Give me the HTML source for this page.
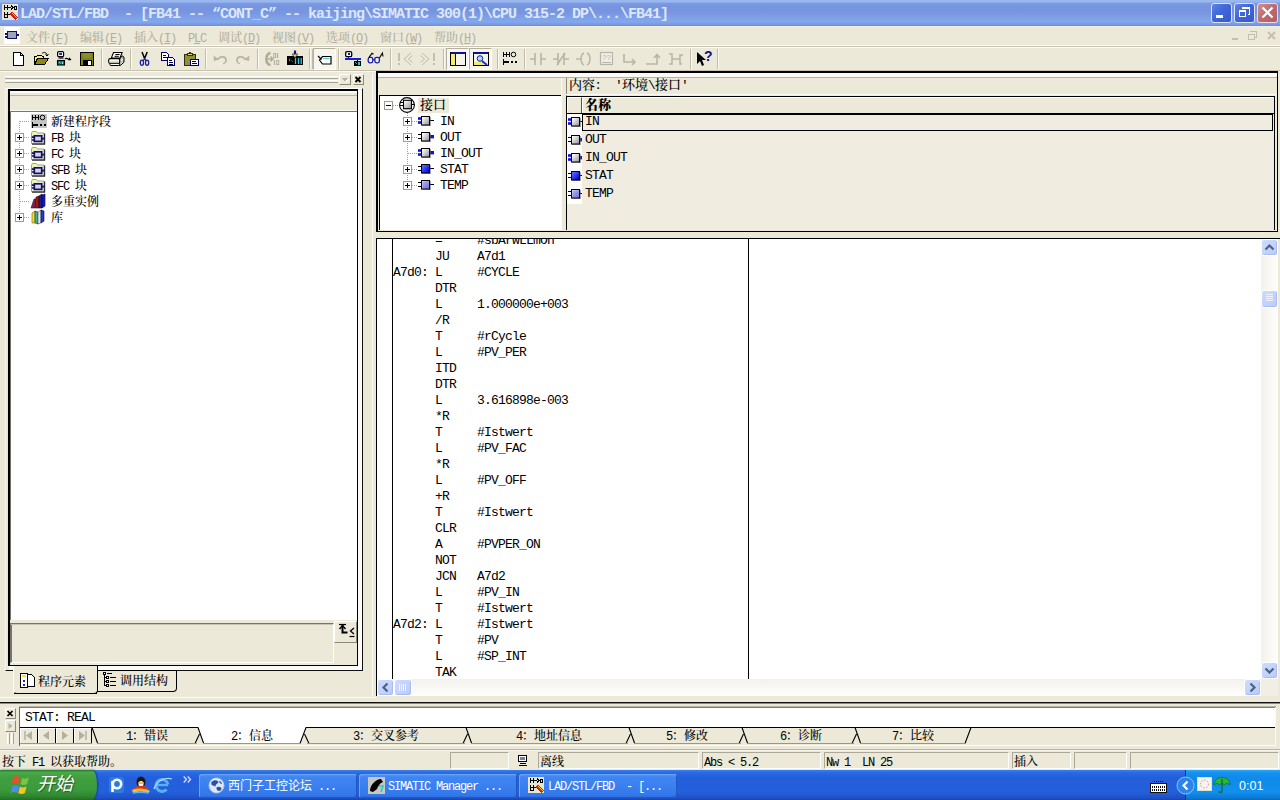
<!DOCTYPE html><html lang="zh"><head><meta charset="utf-8"><title>LAD/STL/FBD</title><style>
html,body{margin:0;padding:0}
body{width:1280px;height:800px;overflow:hidden;background:#ece9d8;position:relative;font-family:"Liberation Mono","Noto Serif CJK SC",monospace;font-size:12px;color:#000}
.a{position:absolute;box-sizing:border-box}
.t{white-space:pre;line-height:14px;height:14px;font-size:12px;font-weight:500}
.l{letter-spacing:-1.2px;font-family:"Liberation Mono",monospace;font-weight:400}
.t13{white-space:pre;line-height:16px;height:16px;font-size:13px;font-weight:500}
.t13 .l{letter-spacing:-0.8px;font-size:13px}
.g{color:#b2ae9f}
svg{position:absolute;overflow:visible}
</style></head><body>
<div class="a " style="left:0px;top:0px;width:1280px;height:26px;background:linear-gradient(to bottom,#9bb9ef 0px,#98b6ee 2px,#7c9ae2 3.500px,#7896df 5px,#7795de 11px,#7b99e3 14px,#80a3ea 19px,#81a8ec 22px,#7c9ae2 24px,#7a8ad2 26px);"></div>
<svg style="left:2px;top:4px" width="17" height="17" viewBox="0 0 17 17" shape-rendering="crispEdges">
<rect x="0" y="0" width="16" height="16" fill="#e8e4d4"/>
<path d="M2 1v5M5 1v5M2 3.5h3M5 3.5h4M9 1.5l2 2-2 2M12 2h2v3h-2zM2 8v6M5 8v6M2 10.5h3M5 10.5h3M2 13.5h3" stroke="#000" stroke-width="1" fill="none"/>
<path d="M8 8l2 0 0 2z" fill="#000"/>
<path d="M9 9l6 6" stroke="#d02010" stroke-width="3"/>
<path d="M10.5 9.5l5 5" stroke="#f0d020" stroke-width="1"/>
</svg>
<div class="a" style="left:20px;top:6px;height:18px;font:bold 15px/18px 'Liberation Mono',monospace;letter-spacing:-1px;color:#dce7fa;white-space:pre">LAD/STL/FBD  - [FB41 -- “CONT_C” -- kaijing\SIMATIC 300(1)\CPU 315-2 DP\...\FB41]</div>
<div class="a " style="left:1211px;top:3px;width:21px;height:20px;background:linear-gradient(135deg,#5f84e8 0%,#4166d8 45%,#3759c8 100%);border:1px solid #d9e4fb;border-radius:3px;"></div><div class="a " style="left:1216px;top:15px;width:7px;height:3px;background:#fff"></div>
<div class="a " style="left:1234px;top:3px;width:21px;height:20px;background:linear-gradient(135deg,#5f84e8 0%,#4166d8 45%,#3759c8 100%);border:1px solid #d9e4fb;border-radius:3px;"></div><svg style="left:1234px;top:3px" width="21" height="20" viewBox="0 0 21 20" shape-rendering="crispEdges"><path d="M8 5h7v6h-2" stroke="#fff" stroke-width="1" fill="none" transform="translate(.5,.5)"/><path d="M8 5h8" stroke="#fff" stroke-width="2"/><rect x="5.500" y="7.500" width="6" height="6" fill="none" stroke="#fff"/><path d="M5 8h7" stroke="#fff" stroke-width="2"/></svg>
<div class="a " style="left:1257px;top:3px;width:21px;height:20px;background:linear-gradient(135deg,#cf8f8f 0%,#bd6a6c 50%,#b55d60 100%);border:1px solid #ecdcea;border-radius:3px;"></div><svg style="left:1257px;top:3px" width="21" height="20" viewBox="0 0 21 20"><path d="M5.500 4.500l10 10M15.500 4.500l-10 10" stroke="#fff" stroke-width="2.200" fill="none"/></svg>
<div class="a " style="left:0px;top:26px;width:1280px;height:20px;background:#ece9d8"></div>
<div class="a " style="left:0px;top:26px;width:1280px;height:2px;background:linear-gradient(to bottom,#eef2ea,#ece9d8)"></div>
<div class="a " style="left:0px;top:45px;width:1280px;height:1px;background:#fbfaf6"></div>
<div class="a " style="left:4px;top:27px;width:16px;height:17px;background:#fff"></div>
<svg style="left:4px;top:27px" width="16" height="17" viewBox="0 0 16 17" shape-rendering="crispEdges">
<rect x="3.5" y="4.5" width="9" height="7" fill="#a0a4b8" stroke="#10106a" stroke-width="1.4"/>
<path d="M1 6.5h2M1 9.5h2M13 8h2" stroke="#10106a" stroke-width="2"/></svg>
<div class="a t g" style="left:26px;top:32px">文件<span class="l">(<u>F</u>)</span></div>
<div class="a t g" style="left:80px;top:32px">编辑<span class="l">(<u>E</u>)</span></div>
<div class="a t g" style="left:134px;top:32px">插入<span class="l">(<u>I</u>)</span></div>
<div class="a t g" style="left:188px;top:32px"><span class="l">P<u>L</u>C</span></div>
<div class="a t g" style="left:218px;top:32px">调试<span class="l">(<u>D</u>)</span></div>
<div class="a t g" style="left:272px;top:32px">视图<span class="l">(<u>V</u>)</span></div>
<div class="a t g" style="left:326px;top:32px">选项<span class="l">(<u>O</u>)</span></div>
<div class="a t g" style="left:380px;top:32px">窗口<span class="l">(<u>W</u>)</span></div>
<div class="a t g" style="left:434px;top:32px">帮助<span class="l">(<u>H</u>)</span></div>
<svg style="left:1228px;top:28px" width="50" height="15" viewBox="0 0 50 15" shape-rendering="crispEdges">
<path d="M4 10.5h6" stroke="#c4c0b0" stroke-width="2"/>
<path d="M22.5 3.5h6v6h-2M22 3h7" stroke="#c4c0b0" stroke-width="1" fill="none"/><rect x="20.500" y="6.500" width="6" height="5" fill="none" stroke="#c4c0b0"/><path d="M20 6h7" stroke="#c4c0b0"/>
<path d="M40 4l7 7M47 4l-7 7" stroke="#c4c0b0" stroke-width="2" shape-rendering="auto"/></svg>
<div class="a " style="left:0px;top:46px;width:1280px;height:1px;background:#c9c5b4"></div>
<div class="a " style="left:0px;top:47px;width:1280px;height:1px;background:#fbfaf6"></div>
<div class="a " style="left:0px;top:70px;width:1280px;height:1px;background:#c5c1b0"></div>
<div class="a " style="left:0px;top:71px;width:376px;height:1px;background:#faf9f4"></div>
<div class="a " style="left:101px;top:49px;width:1px;height:20px;background:#c0bcab"></div><div class="a " style="left:102px;top:49px;width:1px;height:20px;background:#fbfaf5"></div>
<div class="a " style="left:130px;top:49px;width:1px;height:20px;background:#c0bcab"></div><div class="a " style="left:131px;top:49px;width:1px;height:20px;background:#fbfaf5"></div>
<div class="a " style="left:205px;top:49px;width:1px;height:20px;background:#c0bcab"></div><div class="a " style="left:206px;top:49px;width:1px;height:20px;background:#fbfaf5"></div>
<div class="a " style="left:257px;top:49px;width:1px;height:20px;background:#c0bcab"></div><div class="a " style="left:258px;top:49px;width:1px;height:20px;background:#fbfaf5"></div>
<div class="a " style="left:309px;top:49px;width:1px;height:20px;background:#c0bcab"></div><div class="a " style="left:310px;top:49px;width:1px;height:20px;background:#fbfaf5"></div>
<div class="a " style="left:338px;top:49px;width:1px;height:20px;background:#c0bcab"></div><div class="a " style="left:339px;top:49px;width:1px;height:20px;background:#fbfaf5"></div>
<div class="a " style="left:390px;top:49px;width:1px;height:20px;background:#c0bcab"></div><div class="a " style="left:391px;top:49px;width:1px;height:20px;background:#fbfaf5"></div>
<div class="a " style="left:443px;top:49px;width:1px;height:20px;background:#c0bcab"></div><div class="a " style="left:444px;top:49px;width:1px;height:20px;background:#fbfaf5"></div>
<div class="a " style="left:497px;top:49px;width:1px;height:20px;background:#c0bcab"></div><div class="a " style="left:498px;top:49px;width:1px;height:20px;background:#fbfaf5"></div>
<div class="a " style="left:524px;top:49px;width:1px;height:20px;background:#c0bcab"></div><div class="a " style="left:525px;top:49px;width:1px;height:20px;background:#fbfaf5"></div>
<div class="a " style="left:690px;top:49px;width:1px;height:20px;background:#c0bcab"></div><div class="a " style="left:691px;top:49px;width:1px;height:20px;background:#fbfaf5"></div>
<div class="a " style="left:717px;top:49px;width:1px;height:20px;background:#c0bcab"></div><div class="a " style="left:718px;top:49px;width:1px;height:20px;background:#fbfaf5"></div>
<div class="a " style="left:312px;top:49px;width:1px;height:20px;background:#c0bcab"></div>
<div class="a " style="left:313px;top:48px;width:23px;height:22px;background:#f6f5ee;border-top:1px solid #b4b0a0;border-left:1px solid #b4b0a0;border-right:1px solid #fff;border-bottom:1px solid #fff"></div>
<div class="a " style="left:446px;top:48px;width:23px;height:22px;background:#f6f5ee;border-top:1px solid #b4b0a0;border-left:1px solid #b4b0a0;border-right:1px solid #fff;border-bottom:1px solid #fff"></div>
<div class="a " style="left:469px;top:48px;width:23px;height:22px;background:#f6f5ee;border-top:1px solid #b4b0a0;border-left:1px solid #b4b0a0;border-right:1px solid #fff;border-bottom:1px solid #fff"></div>
<svg style="left:11px;top:51px" width="16" height="16" viewBox="0 0 16 16" shape-rendering="crispEdges"><path d="M2.500 1.500h7l3 3v10h-10z" fill="#fff" stroke="#000"/><path d="M9.500 1.500v3h3" fill="none" stroke="#000"/></svg>
<svg style="left:33px;top:51px" width="16" height="16" viewBox="0 0 16 16" shape-rendering="crispEdges"><path d="M1.500 13.500v-8h2l1-1h4l1 1h1v2" fill="#f8f070" stroke="#000"/><path d="M1.500 13.500l3-6h11l-4 6z" fill="#8a8a10" stroke="#000"/><path d="M9 2.500c2-2 5-1 5 2M12.500 3.500l1.500 1.500 1.500-2" fill="none" stroke="#000" shape-rendering="auto"/></svg>
<svg style="left:56px;top:51px" width="16" height="16" viewBox="0 0 16 16"><rect x="1.600" y="0.600" width="6" height="5" rx="1.200" fill="#fff" stroke="#000" stroke-width="1.200"/><rect x="3.200" y="2" width="2.800" height="2" fill="#2020c0"/><path d="M2.500 7h5" stroke="#000" stroke-width="1.200"/><rect x="1.500" y="9.500" width="7" height="4.500" fill="#107878" stroke="#000" stroke-width="1.100"/><path d="M3 11l1.500 1.500M6.500 10.800v2.200" stroke="#7fe8e8" stroke-width="1"/><path d="M9 8c2-2.500 3.500 1.500 5.500 0.500" stroke="#000" fill="none" stroke-width="1.200"/><path d="M13.200 6.300l2.300 2.400-3 .8z" fill="#000"/></svg>
<svg style="left:79px;top:51px" width="16" height="16" viewBox="0 0 16 16" shape-rendering="crispEdges"><rect x="1.500" y="1.500" width="13" height="13" fill="#808018" stroke="#000"/><rect x="4" y="2" width="8" height="5" fill="#8c8c28"/><rect x="4" y="9" width="9" height="5" fill="#000"/><rect x="9" y="10" width="3" height="4" fill="#fff"/></svg>
<svg style="left:108px;top:51px" width="17" height="16" viewBox="0 0 17 16"><path d="M11.600 8l2.600-3.200 1.800 1.400v5l-3.800 3.400h-1z" fill="#b4b4ac" stroke="#000" stroke-width="1"/><path d="M12.800 7.500l2 1.800M12.600 10.500l2.200-2M12.800 12.800l2-1.800" stroke="#fff" stroke-width=".9"/><path d="M5.500 1.500h8.600l-2.200 5.600h-8.600z" fill="#fff" stroke="#000" stroke-width="1.100"/><path d="M7.400 3.500h4.200M6.600 5.300h4.200" stroke="#000" stroke-width="1"/><rect x="2" y="12" width="9.600" height="2.500" rx=".8" fill="#fff" stroke="#000" stroke-width="1"/><rect x="0.700" y="7.600" width="11" height="4.700" rx="1.400" fill="#fff" stroke="#000" stroke-width="1.100"/><rect x="1.700" y="9.700" width="9.200" height="1.300" fill="#e4e48a"/></svg>
<svg style="left:137px;top:51px" width="16" height="16" viewBox="0 0 16 16"><path d="M5 1l2.600 6.500M10.200 1l-2.600 6.500" stroke="#000" stroke-width="1.500" fill="none"/><path d="M7.600 7.500l-1.500 2.500M7.600 7.500l1.500 2.500" stroke="#1c1c9c" stroke-width="1.300"/><ellipse cx="4.900" cy="11.800" rx="1.600" ry="2.600" fill="none" stroke="#1c1c9c" stroke-width="1.300"/><ellipse cx="10.100" cy="11.800" rx="1.600" ry="2.600" fill="none" stroke="#1c1c9c" stroke-width="1.300"/></svg>
<svg style="left:160px;top:51px" width="16" height="16" viewBox="0 0 16 16" shape-rendering="crispEdges"><path d="M1.500 1.500h5l2 2v6h-7z" fill="#fff" stroke="#000060"/><path d="M3 4h3M3 6h4" stroke="#000060"/><path d="M7.500 6.500h5l2 2v6h-7z" fill="#fff" stroke="#000060"/><path d="M9 9h3M9 11h4M9 13h4" stroke="#000060"/></svg>
<svg style="left:183px;top:51px" width="16" height="16" viewBox="0 0 16 16" shape-rendering="crispEdges"><rect x="1.500" y="3.500" width="11" height="11" fill="#90903a" stroke="#303010"/><path d="M4.500 4.500v-2h1.500l1-1 1 1h1.500v2z" fill="#e0d870" stroke="#303010"/><path d="M7.500 8.500h6l2 0v6h-8z" fill="#fff" stroke="#000070"/><path d="M9 10.500h4M9 12.500h5" stroke="#000070"/></svg>
<svg style="left:212px;top:51px" width="16" height="16" viewBox="0 0 16 16"><path d="M6 8.500c1.500-3.500 8-3.500 8 .500c0 2-1.500 3.200-3.500 3.500" fill="none" stroke="#b8b4a4" stroke-width="1.700"/><path d="M1.500 4.500l.5 5.500 5-1.500z" fill="#b8b4a4"/><path d="M7 13c2 0 5-1 6-3" fill="none" stroke="#fff" stroke-width="1" opacity=".7"/></svg>
<svg style="left:235px;top:51px" width="16" height="16" viewBox="0 0 16 16"><path d="M10 8.500c-1.500-3.500-8-3.500-8 .500c0 2 1.500 3.200 3.500 3.500" fill="none" stroke="#b8b4a4" stroke-width="1.700"/><path d="M14.500 4.500l-.5 5.500-5-1.500z" fill="#b8b4a4"/><path d="M9 13c-2 0-5-1-6-3" fill="none" stroke="#fff" stroke-width="1" opacity=".7"/></svg>
<svg style="left:264px;top:51px" width="16" height="16" viewBox="0 0 16 16"><path d="M6.500 2.200c-5.500-.5-5.500 12.100 0 11.600" fill="none" stroke="#aeaa9a" stroke-width="2.600"/><path d="M4 8h4.500M6.500 5.500l2.500 2.500-2.500 2.500" fill="none" stroke="#aeaa9a" stroke-width="1.400"/><path d="M13.500 2v5M10.500 9v5" stroke="#b4b0a0" stroke-width="1.200"/><rect x="9.700" y="2.500" width="2" height="4" fill="none" stroke="#b4b0a0"/><rect x="12.700" y="9.500" width="2" height="4" fill="none" stroke="#b4b0a0"/></svg>
<svg style="left:287px;top:50px" width="16" height="17" viewBox="0 0 16 17"><rect x="0" y="6" width="16" height="9" fill="#000"/><path d="M8.500 8v6M11.500 8v6M14.200 8v6" stroke="#38c8d8" stroke-width="1.300"/><path d="M2.500 8.500v3" stroke="#c05040" stroke-width="1"/><path d="M3.500 9.500l2.500 2.500" stroke="#3050d0"/><path d="M8 .500v4" stroke="#101090" stroke-width="2.200"/><path d="M5.200 4h5.600l-2.800 4z" fill="#f0e020" stroke="#101090" stroke-width="0.700"/></svg>
<svg style="left:317px;top:51px" width="16" height="16" viewBox="0 0 16 16"><path d="M5.500 5.500h8.500v7.500h-8.500l-3-4z" fill="#fff" stroke="#000" stroke-width="1.200"/><path d="M1 5l3.500 3.500" stroke="#000" stroke-width="1.100"/><path d="M6 7.500h6.500" stroke="#50d0d0" stroke-width="1.400"/></svg>
<svg style="left:345px;top:50px" width="16" height="17" viewBox="0 0 16 17" shape-rendering="crispEdges"><rect x="0.700" y="1.700" width="6" height="5" rx="1.200" fill="#fff" stroke="#000" stroke-width="1.300" shape-rendering="auto"/><rect x="2.500" y="3.200" width="2.500" height="1.800" fill="#1818a0"/><path d="M3.700 7v1.500" stroke="#1010c0" stroke-width="1.400"/><path d="M0 9h16" stroke="#1020e0" stroke-width="2"/><path d="M12.500 10v2" stroke="#000"/><rect x="9" y="11" width="7" height="5" fill="#000"/><path d="M10.500 12.500l1.500 1.500" stroke="#30c0c0"/><path d="M14 12v3" stroke="#30c0c0" stroke-width="1.200"/></svg>
<svg style="left:367px;top:51px" width="16" height="16" viewBox="0 0 16 16"><rect x="1.200" y="6.300" width="4.600" height="5.600" rx="1.800" fill="#f0f0c8" stroke="#1818b8" stroke-width="1.300"/><rect x="7.800" y="6.300" width="4.600" height="5.600" rx="1.800" fill="#f0f0c8" stroke="#1818b8" stroke-width="1.300"/><path d="M5.800 8.500h2" stroke="#1818b8"/><path d="M2 6.300l3-4 1.500 1M12.400 7l3-5 .6 3.500" fill="none" stroke="#000" stroke-width="1.100"/></svg>
<svg style="left:397px;top:51px" width="16" height="16" viewBox="0 0 16 16"><path d="M2 2v8M2 12v2" stroke="#b8b4a4" stroke-width="1.600"/><path d="M14 2l-7 6 7 6M15.500 4.500l-4 3.500 4 3.500" fill="none" stroke="#c0bcac" stroke-width="1"/></svg>
<svg style="left:420px;top:51px" width="16" height="16" viewBox="0 0 16 16"><path d="M14 2v8M14 12v2" stroke="#b8b4a4" stroke-width="1.600"/><path d="M2 2l7 6-7 6M0.500 4.500l4 3.500-4 3.500" fill="none" stroke="#c0bcac" stroke-width="1"/></svg>
<svg style="left:450px;top:51px" width="16" height="16" viewBox="0 0 16 16" shape-rendering="crispEdges"><rect x="0.500" y="1.500" width="15" height="13" fill="#f4f4ee" stroke="#000"/><rect x="1" y="1" width="14" height="2" fill="#101090"/><rect x="1" y="3" width="4" height="11" fill="#f4ec70"/><path d="M5.500 3v11" stroke="#000"/></svg>
<svg style="left:473px;top:51px" width="16" height="16" viewBox="0 0 16 16" shape-rendering="crispEdges"><rect x="0.500" y="1.500" width="15" height="13" fill="#f4f4ee" stroke="#000"/><rect x="1" y="1" width="14" height="2" fill="#101090"/><rect x="1" y="11" width="10" height="3" fill="#f4ec70"/><circle cx="7" cy="7.500" r="2.800" fill="#a0e0f0" stroke="#1818a0" shape-rendering="auto"/><path d="M9 10l5 4" stroke="#2030d0" stroke-width="2" shape-rendering="auto"/></svg>
<svg style="left:502px;top:51px" width="16" height="16" viewBox="0 0 16 16" shape-rendering="crispEdges"><path d="M1.500 1v5M4.500 1v5M1.500 3.500h3M4.500 3.500h3M7.500 1v5" stroke="#000" fill="none"/><circle cx="11.500" cy="3.500" r="2.300" fill="none" stroke="#000" shape-rendering="auto"/><path d="M1.500 8v6" stroke="#000" stroke-width="1.400"/><path d="M1 11h6" stroke="#000" stroke-width="2"/><path d="M9 11h2M13 11h2" stroke="#000" stroke-width="2"/></svg>
<svg style="left:530px;top:51px" width="16" height="16" viewBox="0 0 16 16"><path d="M0 8h5M11 8h5" stroke="#b9b5a6" stroke-width="1.400"/><path d="M5 2v12M11 2v12" stroke="#b9b5a6" stroke-width="1.600"/></svg>
<svg style="left:553px;top:51px" width="16" height="16" viewBox="0 0 16 16"><path d="M0 8h5M11 8h5" stroke="#b9b5a6" stroke-width="1.400"/><path d="M5 2v12M11 2v12" stroke="#b9b5a6" stroke-width="1.600"/><path d="M4 14l8-12" stroke="#b9b5a6" stroke-width="1.600"/></svg>
<svg style="left:576px;top:51px" width="16" height="16" viewBox="0 0 16 16"><path d="M0 8h5" stroke="#b9b5a6" stroke-width="1.400"/><path d="M8 2c-4 2-4 10 0 12M11 2c4 2 4 10 0 12" fill="none" stroke="#b9b5a6" stroke-width="1.500"/></svg>
<svg style="left:599px;top:51px" width="16" height="16" viewBox="0 0 16 16"><rect x="1.500" y="1.500" width="12" height="12" fill="#f0eee4" stroke="#b9b5a6" stroke-width="1.200"/><text x="3" y="9" font-size="8" font-family="Liberation Sans,sans-serif" fill="#b9b5a6">??</text><path d="M3 11.500h9" stroke="#b9b5a6"/></svg>
<svg style="left:622px;top:51px" width="16" height="16" viewBox="0 0 16 16"><path d="M2 3v8h11M10 8l3 3-3 3" fill="none" stroke="#b9b5a6" stroke-width="1.600"/></svg>
<svg style="left:645px;top:51px" width="16" height="16" viewBox="0 0 16 16"><path d="M1 13h11v-9M9 7l3-3.500 3 3.500" fill="none" stroke="#b9b5a6" stroke-width="1.600"/></svg>
<svg style="left:668px;top:51px" width="16" height="16" viewBox="0 0 16 16"><path d="M1 3h3v10h-3M4 8h8M15 4h-3v9h2" fill="none" stroke="#b9b5a6" stroke-width="1.500"/></svg>
<svg style="left:696px;top:50px" width="18" height="18" viewBox="0 0 18 18"><path d="M1 2v12l3-3 2 5 2-1-2-5h4z" fill="#000"/><text x="8" y="11" font-size="14" font-weight="bold" font-family="Liberation Sans,sans-serif" fill="#101080">?</text></svg>
<div class="a " style="left:5px;top:76px;width:333px;height:1px;background:#fff"></div>
<div class="a " style="left:5px;top:77px;width:333px;height:1px;background:#f4f2e8"></div>
<div class="a " style="left:5px;top:78px;width:333px;height:1px;background:#a8a494"></div>
<div class="a " style="left:5px;top:80px;width:333px;height:1px;background:#fff"></div>
<div class="a " style="left:5px;top:81px;width:333px;height:1px;background:#f4f2e8"></div>
<div class="a " style="left:5px;top:82px;width:333px;height:1px;background:#a8a494"></div>
<div class="a " style="left:339px;top:74px;width:12px;height:11px;background:#ece9d8;border-top:1px solid #fff;border-left:1px solid #fff;border-right:1px solid #8c897a;border-bottom:1px solid #8c897a;"></div>
<svg style="left:339px;top:74px" width="12" height="11" viewBox="0 0 12 11"><path d="M3 4h6l-3 3.500z" fill="#b4b0a0"/><path d="M4 5h6l-3 3.500z" fill="#fff" opacity=".8"/><path d="M3 4h6l-3 3.500z" fill="#b4b0a0"/></svg>
<div class="a " style="left:353px;top:74px;width:11px;height:11px;background:#ece9d8;border-top:1px solid #fff;border-left:1px solid #fff;border-right:1px solid #8c897a;border-bottom:1px solid #8c897a;"></div>
<svg style="left:353px;top:74px" width="11" height="11" viewBox="0 0 11 11"><path d="M2.500 3l5 5M7.500 3l-5 5" stroke="#000" stroke-width="1.900"/></svg>
<div class="a " style="left:5px;top:88px;width:358px;height:583px;border-top:1px solid #fff;border-left:1px solid #f6f4ec;border-right:1px solid #111;border-bottom:1px solid #111;"></div>
<div class="a " style="left:8px;top:89px;width:350px;height:577px;border:1px solid #000;border-top-width:2px;border-left-width:2px;background:#ece9d8"></div>
<div class="a " style="left:358px;top:90px;width:4px;height:580px;background:#fbfaf6"></div>
<div class="a " style="left:9px;top:666px;width:352px;height:4px;background:#fbfaf6"></div>
<div class="a " style="left:10px;top:91px;width:347px;height:2px;background:#fbfaf6"></div>
<div class="a " style="left:10px;top:95px;width:347px;height:1px;background:#b9b5a5"></div>
<div class="a " style="left:10px;top:110px;width:347px;height:1px;background:#fbfaf6"></div>
<div class="a " style="left:10px;top:111px;width:347px;height:1px;background:#77756a"></div>
<div class="a " style="left:10px;top:112px;width:1px;height:508px;background:#77756a"></div>
<div class="a " style="left:11px;top:112px;width:346px;height:508px;background:#fff"></div>
<div class="a " style="left:19px;top:121px;width:1px;height:96px;background:repeating-linear-gradient(to bottom,#a0a0a0 0 1px,transparent 1px 2px)"></div>
<div class="a " style="left:20px;top:121px;width:10px;height:1px;background:repeating-linear-gradient(to right,#a0a0a0 0 1px,transparent 1px 2px)"></div>
<div class="a " style="left:20px;top:137px;width:10px;height:1px;background:repeating-linear-gradient(to right,#a0a0a0 0 1px,transparent 1px 2px)"></div>
<div class="a " style="left:20px;top:153px;width:10px;height:1px;background:repeating-linear-gradient(to right,#a0a0a0 0 1px,transparent 1px 2px)"></div>
<div class="a " style="left:20px;top:169px;width:10px;height:1px;background:repeating-linear-gradient(to right,#a0a0a0 0 1px,transparent 1px 2px)"></div>
<div class="a " style="left:20px;top:185px;width:10px;height:1px;background:repeating-linear-gradient(to right,#a0a0a0 0 1px,transparent 1px 2px)"></div>
<div class="a " style="left:20px;top:201px;width:10px;height:1px;background:repeating-linear-gradient(to right,#a0a0a0 0 1px,transparent 1px 2px)"></div>
<div class="a " style="left:20px;top:217px;width:10px;height:1px;background:repeating-linear-gradient(to right,#a0a0a0 0 1px,transparent 1px 2px)"></div>
<div class="a " style="left:15px;top:133px;width:9px;height:9px;background:#fff;border:1px solid #9c9c94"></div><div class="a " style="left:17px;top:137px;width:5px;height:1px;background:#000"></div><div class="a " style="left:19px;top:135px;width:1px;height:5px;background:#000"></div>
<div class="a " style="left:15px;top:149px;width:9px;height:9px;background:#fff;border:1px solid #9c9c94"></div><div class="a " style="left:17px;top:153px;width:5px;height:1px;background:#000"></div><div class="a " style="left:19px;top:151px;width:1px;height:5px;background:#000"></div>
<div class="a " style="left:15px;top:165px;width:9px;height:9px;background:#fff;border:1px solid #9c9c94"></div><div class="a " style="left:17px;top:169px;width:5px;height:1px;background:#000"></div><div class="a " style="left:19px;top:167px;width:1px;height:5px;background:#000"></div>
<div class="a " style="left:15px;top:181px;width:9px;height:9px;background:#fff;border:1px solid #9c9c94"></div><div class="a " style="left:17px;top:185px;width:5px;height:1px;background:#000"></div><div class="a " style="left:19px;top:183px;width:1px;height:5px;background:#000"></div>
<div class="a " style="left:15px;top:213px;width:9px;height:9px;background:#fff;border:1px solid #9c9c94"></div><div class="a " style="left:17px;top:217px;width:5px;height:1px;background:#000"></div><div class="a " style="left:19px;top:215px;width:1px;height:5px;background:#000"></div>
<svg style="left:31px;top:114px" width="16" height="14" viewBox="0 0 16 14" shape-rendering="crispEdges"><rect width="16" height="14" fill="#c4c4c4"/><path d="M1.500 1v5M4.500 1v5M1.500 3.500h3M4.500 3.500h3M7.500 1v5" stroke="#000" fill="none"/><circle cx="11.500" cy="3.500" r="2.300" fill="none" stroke="#000" shape-rendering="auto"/><path d="M1.500 8v6" stroke="#000" stroke-width="1.400"/><path d="M1 11h6M9 11h2M13 11h2" stroke="#000" stroke-width="2"/></svg>
<svg style="left:30px;top:130px" width="16" height="15" viewBox="0 0 16 15"><defs><linearGradient id="fg130" x1="0" y1="0" x2="1" y2="1"><stop offset="0" stop-color="#f4f48c"/><stop offset=".45" stop-color="#f4f4e4"/><stop offset="1" stop-color="#d8d8c8"/></linearGradient></defs><path d="M1.500 13.500v-10.500l1.200-1.500h3.600l1.200 1.500h6.500v10.500z" fill="url(#fg130)" stroke="#8a8a70" stroke-width=".8"/><path d="M2 14.200h13M14.600 3.500v11" stroke="#2a2a2a" stroke-width="1.200"/><rect x="4.300" y="5.800" width="7.400" height="5.600" fill="#d4d4e0" stroke="#10106c" stroke-width="1.700"/><path d="M1.800 7.200h2.500M1.800 10h2.500M11.700 8.600h2.600" stroke="#10106c" stroke-width="1.700"/></svg>
<svg style="left:30px;top:146px" width="16" height="15" viewBox="0 0 16 15"><defs><linearGradient id="fg146" x1="0" y1="0" x2="1" y2="1"><stop offset="0" stop-color="#f4f48c"/><stop offset=".45" stop-color="#f4f4e4"/><stop offset="1" stop-color="#d8d8c8"/></linearGradient></defs><path d="M1.500 13.500v-10.500l1.200-1.500h3.600l1.200 1.500h6.500v10.500z" fill="url(#fg146)" stroke="#8a8a70" stroke-width=".8"/><path d="M2 14.200h13M14.600 3.500v11" stroke="#2a2a2a" stroke-width="1.200"/><rect x="4.300" y="5.800" width="7.400" height="5.600" fill="#d4d4e0" stroke="#10106c" stroke-width="1.700"/><path d="M1.800 7.200h2.500M1.800 10h2.500M11.700 8.600h2.600" stroke="#10106c" stroke-width="1.700"/></svg>
<svg style="left:30px;top:162px" width="16" height="15" viewBox="0 0 16 15"><defs><linearGradient id="fg162" x1="0" y1="0" x2="1" y2="1"><stop offset="0" stop-color="#f4f48c"/><stop offset=".45" stop-color="#f4f4e4"/><stop offset="1" stop-color="#d8d8c8"/></linearGradient></defs><path d="M1.500 13.500v-10.500l1.200-1.500h3.600l1.200 1.500h6.500v10.500z" fill="url(#fg162)" stroke="#8a8a70" stroke-width=".8"/><path d="M2 14.200h13M14.600 3.500v11" stroke="#2a2a2a" stroke-width="1.200"/><rect x="4.300" y="5.800" width="7.400" height="5.600" fill="#d4d4e0" stroke="#10106c" stroke-width="1.700"/><path d="M1.800 7.200h2.500M1.800 10h2.500M11.700 8.600h2.600" stroke="#10106c" stroke-width="1.700"/></svg>
<svg style="left:30px;top:178px" width="16" height="15" viewBox="0 0 16 15"><defs><linearGradient id="fg178" x1="0" y1="0" x2="1" y2="1"><stop offset="0" stop-color="#f4f48c"/><stop offset=".45" stop-color="#f4f4e4"/><stop offset="1" stop-color="#d8d8c8"/></linearGradient></defs><path d="M1.500 13.500v-10.500l1.200-1.500h3.600l1.200 1.500h6.500v10.500z" fill="url(#fg178)" stroke="#8a8a70" stroke-width=".8"/><path d="M2 14.200h13M14.600 3.500v11" stroke="#2a2a2a" stroke-width="1.200"/><rect x="4.300" y="5.800" width="7.400" height="5.600" fill="#d4d4e0" stroke="#10106c" stroke-width="1.700"/><path d="M1.800 7.200h2.500M1.800 10h2.500M11.700 8.600h2.600" stroke="#10106c" stroke-width="1.700"/></svg>
<svg style="left:30px;top:193px" width="17" height="16" viewBox="0 0 17 16"><path d="M1 15l3-9h3l-2 9z" fill="#802050" stroke="#401028" stroke-width=".6"/><path d="M5 15l1-11l3-1v12z" fill="#a01818" stroke="#400" stroke-width=".6"/><path d="M9 15v-12l3-2v14z" fill="#202080" stroke="#000040" stroke-width=".6"/><path d="M12 15v-13l3-1v12z" fill="#1818c0" stroke="#000040" stroke-width=".6"/></svg>
<svg style="left:30px;top:209px" width="17" height="16" viewBox="0 0 17 16"><path d="M2 14v-10l3-2v12z" fill="#f0e030" stroke="#806000" stroke-width=".6"/><path d="M5 14v-12l3 1v12z" fill="#40b0a0" stroke="#004040" stroke-width=".6"/><path d="M8 15v-12l3-2v13z" fill="#e8e8e8" stroke="#555" stroke-width=".6"/><path d="M11 14v-13l3 1v10z" fill="#2838d0" stroke="#000040" stroke-width=".6"/></svg>
<div class="a t " style="left:51px;top:116px;">新建程序段</div>
<div class="a t " style="left:51px;top:132px;"><span class="l">FB </span>块</div>
<div class="a t " style="left:51px;top:148px;"><span class="l">FC </span>块</div>
<div class="a t " style="left:51px;top:164px;"><span class="l">SFB </span>块</div>
<div class="a t " style="left:51px;top:180px;"><span class="l">SFC </span>块</div>
<div class="a t " style="left:51px;top:196px;">多重实例</div>
<div class="a t " style="left:51px;top:212px;">库</div>
<div class="a " style="left:10px;top:623px;width:324px;height:40px;border-top:1px solid #77756a;border-left:2px solid #77756a;border-bottom:1px solid #fff;border-right:1px solid #fff;background:#ece9d8"></div>
<div class="a " style="left:11px;top:624px;width:322px;height:1px;background:#c8c4b4"></div>
<div class="a " style="left:334px;top:621px;width:23px;height:22px;background:#ece9d8;border-top:1px solid #fff;border-left:1px solid #fff;border-right:1px solid #8c897a;border-bottom:1px solid #8c897a;"></div>
<svg style="left:334px;top:621px" width="23" height="22" viewBox="0 0 23 22"><path d="M5 3.500h7" stroke="#000" stroke-width="1.200"/><path d="M8.500 4v7.500h5" stroke="#000" stroke-width="2" fill="none"/><path d="M5.500 8l3-3.500 3 3.500" stroke="#000" stroke-width="1.400" fill="none"/><path d="M20 7l-3.500 3 3.500 3" stroke="#000" stroke-width="1.300" fill="none"/><path d="M15.500 15.500h5" stroke="#000" stroke-width="1.200"/></svg>
<div class="a " style="left:97px;top:670px;width:80px;height:22px;background:#ece9d8;border:1px solid #000;border-top:1px solid #000;border-radius:0 0 4px 0;border-left:none"></div>
<svg style="left:102px;top:672px" width="16" height="16" viewBox="0 0 16 16" shape-rendering="crispEdges"><path d="M2.500 2v12M2.500 5.500h2M2.500 9.500h2M2.500 13.500h2" stroke="#000" fill="none"/><rect x="1.500" y="0.500" width="2" height="2" fill="#fff" stroke="#000"/><rect x="4.500" y="4.500" width="2" height="2" fill="#fff" stroke="#000"/><rect x="4.500" y="8.500" width="2" height="2" fill="#fff" stroke="#000"/><rect x="4.500" y="12.500" width="2" height="2" fill="#fff" stroke="#000"/><path d="M5 1.500h5M8 5.500h6M8 9.500h6M8 13.500h6" stroke="#000"/></svg>
<div class="a t " style="left:120px;top:675px;">调用结构</div>
<div class="a " style="left:13px;top:666px;width:85px;height:28px;background:#ece9d8;border-left:1px solid #fff;border-right:1px solid #000;border-bottom:1px solid #000;border-radius:0 0 4px 4px"></div>
<div class="a " style="left:14px;top:693px;width:83px;height:1px;background:#000"></div>
<svg style="left:19px;top:673px" width="16" height="15" viewBox="0 0 16 15" shape-rendering="crispEdges"><path d="M7.500 1.500h5l3 3v9h-8z" fill="#fff" stroke="#000"/><rect x="1.500" y="0.500" width="7" height="14" fill="#fff" stroke="#000" stroke-width="1.500"/><rect x="3" y="2" width="4" height="2" fill="#e8e040"/><rect x="4" y="7" width="2" height="2" fill="#2020d0"/><rect x="4" y="11" width="2" height="2" fill="#2020d0"/></svg>
<div class="a t " style="left:38px;top:676px;">程序元素</div>
<div class="a " style="left:0px;top:697px;width:1280px;height:1px;background:#fbfaf6"></div>
<div class="a " style="left:0px;top:702px;width:1280px;height:1px;background:#111"></div>
<div class="a " style="left:0px;top:703px;width:1280px;height:1px;background:#8c897a"></div>
<div class="a " style="left:372px;top:74px;width:1px;height:622px;background:#fbfaf6"></div>
<div class="a " style="left:376px;top:71px;width:902px;height:161px;border:2px solid #000;border-right-width:1px;border-bottom-width:1px;background:#ece9d8"></div>
<div class="a " style="left:378px;top:73px;width:899px;height:4px;background:#fbfaf6"></div>
<div class="a " style="left:378px;top:77px;width:899px;height:1px;background:#b4b0a0"></div>
<div class="a " style="left:379px;top:95px;width:182px;height:135px;background:#fff;border-top:1px solid #000;border-left:1px solid #000"></div>
<div class="a " style="left:561px;top:78px;width:1px;height:152px;background:#fbfaf6"></div>
<div class="a " style="left:566px;top:78px;width:1px;height:18px;background:#8c897a"></div>
<div class="a " style="left:384px;top:101px;width:9px;height:9px;background:#fff;border:1px solid #9c9c94"></div><div class="a " style="left:386px;top:105px;width:5px;height:1px;background:#000"></div>
<div class="a " style="left:393px;top:105px;width:6px;height:1px;background:repeating-linear-gradient(to right,#a0a0a0 0 1px,transparent 1px 2px)"></div>
<div class="a " style="left:407px;top:113px;width:1px;height:73px;background:repeating-linear-gradient(to bottom,#a0a0a0 0 1px,transparent 1px 2px)"></div>
<div class="a " style="left:408px;top:121px;width:10px;height:1px;background:repeating-linear-gradient(to right,#a0a0a0 0 1px,transparent 1px 2px)"></div>
<div class="a " style="left:408px;top:137px;width:10px;height:1px;background:repeating-linear-gradient(to right,#a0a0a0 0 1px,transparent 1px 2px)"></div>
<div class="a " style="left:408px;top:153px;width:10px;height:1px;background:repeating-linear-gradient(to right,#a0a0a0 0 1px,transparent 1px 2px)"></div>
<div class="a " style="left:408px;top:169px;width:10px;height:1px;background:repeating-linear-gradient(to right,#a0a0a0 0 1px,transparent 1px 2px)"></div>
<div class="a " style="left:408px;top:185px;width:10px;height:1px;background:repeating-linear-gradient(to right,#a0a0a0 0 1px,transparent 1px 2px)"></div>
<div class="a " style="left:403px;top:117px;width:9px;height:9px;background:#fff;border:1px solid #9c9c94"></div><div class="a " style="left:405px;top:121px;width:5px;height:1px;background:#000"></div><div class="a " style="left:407px;top:119px;width:1px;height:5px;background:#000"></div>
<div class="a " style="left:403px;top:133px;width:9px;height:9px;background:#fff;border:1px solid #9c9c94"></div><div class="a " style="left:405px;top:137px;width:5px;height:1px;background:#000"></div><div class="a " style="left:407px;top:135px;width:1px;height:5px;background:#000"></div>
<div class="a " style="left:403px;top:165px;width:9px;height:9px;background:#fff;border:1px solid #9c9c94"></div><div class="a " style="left:405px;top:169px;width:5px;height:1px;background:#000"></div><div class="a " style="left:407px;top:167px;width:1px;height:5px;background:#000"></div>
<div class="a " style="left:403px;top:181px;width:9px;height:9px;background:#fff;border:1px solid #9c9c94"></div><div class="a " style="left:405px;top:185px;width:5px;height:1px;background:#000"></div><div class="a " style="left:407px;top:183px;width:1px;height:5px;background:#000"></div>
<div class="a " style="left:418px;top:98px;width:31px;height:15px;background:#ece9d8"></div>
<div class="a t13 " style="left:420px;top:98px;">接口</div>
<svg style="left:399px;top:97px" width="16" height="16" viewBox="0 0 16 16"><defs><linearGradient id="grt" x1="0" y1="0" x2="1" y2="1"><stop offset=".15" stop-color="#f4f4f4"/><stop offset=".9" stop-color="#9a9a9a"/></linearGradient></defs><circle cx="8" cy="8" r="7.400" fill="#fff" stroke="#000" stroke-width="1.100"/><path d="M1 5.500h3.500M1 8.500h3.500M12.500 7.500h3" stroke="#000" stroke-width="1"/><rect x="5" y="3.800" width="8" height="8.500" fill="#444" opacity=".5"/><rect x="4.500" y="3.300" width="8" height="8.400" fill="url(#grt)" stroke="#000" stroke-width="1.100"/></svg>
<svg style="left:418px;top:116px;overflow:hidden" width="17" height="11" viewBox="0 0 17 11"><defs><linearGradient id="gin418116" x1="0" y1="0" x2="1" y2="1"><stop offset="0.150" stop-color="#fbfbfb"/><stop offset="0.900" stop-color="#9c9c9c"/></linearGradient></defs><rect x="0" y="1.200" width="3.500" height="2.600" fill="#1212d8"/><rect x="0" y="5.200" width="3.500" height="2.600" fill="#1212d8"/><path d="M12 4.500h4" stroke="#000" stroke-width="1" shape-rendering="crispEdges"/><rect x="4" y="1" width="9" height="9" fill="#555" opacity=".55"/><rect x="3.500" y="0.500" width="8" height="8.500" fill="url(#gin418116)" stroke="#000" stroke-width="1"/></svg>
<div class="a t13 " style="left:440px;top:114px;"><span class="l">IN</span></div>
<svg style="left:418px;top:132px;overflow:hidden" width="17" height="11" viewBox="0 0 17 11"><defs><linearGradient id="gout418132" x1="0" y1="0" x2="1" y2="1"><stop offset="0.150" stop-color="#fbfbfb"/><stop offset="0.900" stop-color="#9c9c9c"/></linearGradient></defs><path d="M0 2.500h4M0 6.500h4" stroke="#000" stroke-width="1" shape-rendering="crispEdges"/><rect x="12" y="3" width="4" height="3.400" fill="#1212d8"/><rect x="4" y="1" width="9" height="9" fill="#555" opacity=".55"/><rect x="3.500" y="0.500" width="8" height="8.500" fill="url(#gout418132)" stroke="#000" stroke-width="1"/></svg>
<div class="a t13 " style="left:440px;top:130px;"><span class="l">OUT</span></div>
<svg style="left:418px;top:148px;overflow:hidden" width="17" height="11" viewBox="0 0 17 11"><defs><linearGradient id="ginout418148" x1="0" y1="0" x2="1" y2="1"><stop offset="0.150" stop-color="#fbfbfb"/><stop offset="0.900" stop-color="#9c9c9c"/></linearGradient></defs><rect x="0" y="1.200" width="3.500" height="2.600" fill="#1212d8"/><rect x="0" y="5.200" width="3.500" height="2.600" fill="#1212d8"/><rect x="12" y="3" width="4" height="3.400" fill="#1212d8"/><rect x="4" y="1" width="9" height="9" fill="#555" opacity=".55"/><rect x="3.500" y="0.500" width="8" height="8.500" fill="url(#ginout418148)" stroke="#000" stroke-width="1"/></svg>
<div class="a t13 " style="left:440px;top:146px;"><span class="l">IN_OUT</span></div>
<svg style="left:418px;top:164px;overflow:hidden" width="17" height="11" viewBox="0 0 17 11"><defs><linearGradient id="gstat418164" x1="0" y1="0" x2="1" y2="1"><stop offset="0.150" stop-color="#5a6af8"/><stop offset="0.900" stop-color="#0000e0"/></linearGradient></defs><path d="M0 2.500h4M0 6.500h4" stroke="#000" stroke-width="1" shape-rendering="crispEdges"/><path d="M12 4.500h4" stroke="#000" stroke-width="1" shape-rendering="crispEdges"/><rect x="4" y="1" width="9" height="9" fill="#555" opacity=".55"/><rect x="3.500" y="0.500" width="8" height="8.500" fill="url(#gstat418164)" stroke="#000" stroke-width="1"/></svg>
<div class="a t13 " style="left:440px;top:162px;"><span class="l">STAT</span></div>
<svg style="left:418px;top:180px;overflow:hidden" width="17" height="11" viewBox="0 0 17 11"><defs><linearGradient id="gtemp418180" x1="0" y1="0" x2="1" y2="1"><stop offset="0.150" stop-color="#d8d8fc"/><stop offset="0.900" stop-color="#7c7ce8"/></linearGradient></defs><path d="M0 2.500h4M0 6.500h4" stroke="#000" stroke-width="1" shape-rendering="crispEdges"/><path d="M12 4.500h4" stroke="#000" stroke-width="1" shape-rendering="crispEdges"/><rect x="4" y="1" width="9" height="9" fill="#555" opacity=".55"/><rect x="3.500" y="0.500" width="8" height="8.500" fill="url(#gtemp418180)" stroke="#000" stroke-width="1"/><rect x="4.500" y="1.500" width="6" height="6.500" fill="#6060e0" opacity=".35"/></svg>
<div class="a t13 " style="left:440px;top:178px;"><span class="l">TEMP</span></div>
<div class="a t13 " style="left:569px;top:78px;">内容：<span class="l"> '</span>环境<span class="l">\</span>接口<span class="l">'</span></div>
<div class="a " style="left:566px;top:94px;width:711px;height:1px;background:#fbfaf6"></div>
<div class="a " style="left:566px;top:96px;width:709px;height:134px;background:#f0ede0;border:1px solid #000;border-bottom:none"></div>
<div class="a " style="left:567px;top:97px;width:15px;height:16px;background:#ece9d8;border-right:1px solid #55534a;border-top:1px solid #fff;border-left:1px solid #fff"></div>
<div class="a " style="left:582px;top:97px;width:692px;height:16px;background:#ece9d8;border-top:1px solid #fff;border-left:1px solid #fff"></div>
<div class="a t13" style="left:585px;top:97px;font-weight:900;font-family:'Liberation Serif','Noto Serif CJK SC',serif">名称</div>
<div class="a " style="left:567px;top:113px;width:707px;height:1px;background:#000"></div>
<div class="a " style="left:567px;top:114px;width:15px;height:90px;background:#fff"></div>
<div class="a " style="left:582px;top:113px;width:691px;height:18px;border:1px solid #000;border-top-width:2px"></div>
<svg style="left:568px;top:117px;overflow:hidden" width="14" height="11" viewBox="0 0 14 11"><defs><linearGradient id="gin568117" x1="0" y1="0" x2="1" y2="1"><stop offset="0.150" stop-color="#fbfbfb"/><stop offset="0.900" stop-color="#9c9c9c"/></linearGradient></defs><rect x="0" y="1.200" width="3.500" height="2.600" fill="#1212d8"/><rect x="0" y="5.200" width="3.500" height="2.600" fill="#1212d8"/><path d="M12 4.500h4" stroke="#000" stroke-width="1" shape-rendering="crispEdges"/><rect x="4" y="1" width="9" height="9" fill="#555" opacity=".55"/><rect x="3.500" y="0.500" width="8" height="8.500" fill="url(#gin568117)" stroke="#000" stroke-width="1"/></svg>
<div class="a t13 " style="left:585px;top:114px;"><span class="l">IN</span></div>
<svg style="left:568px;top:135px;overflow:hidden" width="14" height="11" viewBox="0 0 14 11"><defs><linearGradient id="gout568135" x1="0" y1="0" x2="1" y2="1"><stop offset="0.150" stop-color="#fbfbfb"/><stop offset="0.900" stop-color="#9c9c9c"/></linearGradient></defs><path d="M0 2.500h4M0 6.500h4" stroke="#000" stroke-width="1" shape-rendering="crispEdges"/><rect x="12" y="3" width="4" height="3.400" fill="#1212d8"/><rect x="4" y="1" width="9" height="9" fill="#555" opacity=".55"/><rect x="3.500" y="0.500" width="8" height="8.500" fill="url(#gout568135)" stroke="#000" stroke-width="1"/></svg>
<div class="a t13 " style="left:585px;top:132px;"><span class="l">OUT</span></div>
<svg style="left:568px;top:153px;overflow:hidden" width="14" height="11" viewBox="0 0 14 11"><defs><linearGradient id="ginout568153" x1="0" y1="0" x2="1" y2="1"><stop offset="0.150" stop-color="#fbfbfb"/><stop offset="0.900" stop-color="#9c9c9c"/></linearGradient></defs><rect x="0" y="1.200" width="3.500" height="2.600" fill="#1212d8"/><rect x="0" y="5.200" width="3.500" height="2.600" fill="#1212d8"/><rect x="12" y="3" width="4" height="3.400" fill="#1212d8"/><rect x="4" y="1" width="9" height="9" fill="#555" opacity=".55"/><rect x="3.500" y="0.500" width="8" height="8.500" fill="url(#ginout568153)" stroke="#000" stroke-width="1"/></svg>
<div class="a t13 " style="left:585px;top:150px;"><span class="l">IN_OUT</span></div>
<svg style="left:568px;top:171px;overflow:hidden" width="14" height="11" viewBox="0 0 14 11"><defs><linearGradient id="gstat568171" x1="0" y1="0" x2="1" y2="1"><stop offset="0.150" stop-color="#5a6af8"/><stop offset="0.900" stop-color="#0000e0"/></linearGradient></defs><path d="M0 2.500h4M0 6.500h4" stroke="#000" stroke-width="1" shape-rendering="crispEdges"/><path d="M12 4.500h4" stroke="#000" stroke-width="1" shape-rendering="crispEdges"/><rect x="4" y="1" width="9" height="9" fill="#555" opacity=".55"/><rect x="3.500" y="0.500" width="8" height="8.500" fill="url(#gstat568171)" stroke="#000" stroke-width="1"/></svg>
<div class="a t13 " style="left:585px;top:168px;"><span class="l">STAT</span></div>
<svg style="left:568px;top:189px;overflow:hidden" width="14" height="11" viewBox="0 0 14 11"><defs><linearGradient id="gtemp568189" x1="0" y1="0" x2="1" y2="1"><stop offset="0.150" stop-color="#d8d8fc"/><stop offset="0.900" stop-color="#7c7ce8"/></linearGradient></defs><path d="M0 2.500h4M0 6.500h4" stroke="#000" stroke-width="1" shape-rendering="crispEdges"/><path d="M12 4.500h4" stroke="#000" stroke-width="1" shape-rendering="crispEdges"/><rect x="4" y="1" width="9" height="9" fill="#555" opacity=".55"/><rect x="3.500" y="0.500" width="8" height="8.500" fill="url(#gtemp568189)" stroke="#000" stroke-width="1"/><rect x="4.500" y="1.500" width="6" height="6.500" fill="#6060e0" opacity=".35"/></svg>
<div class="a t13 " style="left:585px;top:186px;"><span class="l">TEMP</span></div>
<div class="a " style="left:376px;top:238px;width:904px;height:460px;border-left:1px solid #000;border-top:1px solid #000;background:#fff"></div>
<div class="a " style="left:392px;top:239px;width:1px;height:440px;background:#000"></div>
<div class="a " style="left:748px;top:239px;width:1px;height:440px;background:#000"></div>
<div class="a" style="left:378px;top:239px;width:883px;height:440px;overflow:hidden">
<div class="a t13 " style="left:57px;top:-6px;"><span class="l">=</span></div>
<div class="a t13 " style="left:99px;top:-6px;"><span class="l">#sbArwLLmOn</span></div>
<div class="a t13 " style="left:57px;top:10px;"><span class="l">JU</span></div>
<div class="a t13 " style="left:99px;top:10px;"><span class="l">A7d1</span></div>
<div class="a t13 " style="left:15px;top:26px;"><span class="l">A7d0:</span></div>
<div class="a t13 " style="left:57px;top:26px;"><span class="l">L</span></div>
<div class="a t13 " style="left:99px;top:26px;"><span class="l">#CYCLE</span></div>
<div class="a t13 " style="left:57px;top:42px;"><span class="l">DTR</span></div>
<div class="a t13 " style="left:57px;top:58px;"><span class="l">L</span></div>
<div class="a t13 " style="left:99px;top:58px;"><span class="l">1.000000e+003</span></div>
<div class="a t13 " style="left:57px;top:74px;"><span class="l">/R</span></div>
<div class="a t13 " style="left:57px;top:90px;"><span class="l">T</span></div>
<div class="a t13 " style="left:99px;top:90px;"><span class="l">#rCycle</span></div>
<div class="a t13 " style="left:57px;top:106px;"><span class="l">L</span></div>
<div class="a t13 " style="left:99px;top:106px;"><span class="l">#PV_PER</span></div>
<div class="a t13 " style="left:57px;top:122px;"><span class="l">ITD</span></div>
<div class="a t13 " style="left:57px;top:138px;"><span class="l">DTR</span></div>
<div class="a t13 " style="left:57px;top:154px;"><span class="l">L</span></div>
<div class="a t13 " style="left:99px;top:154px;"><span class="l">3.616898e-003</span></div>
<div class="a t13 " style="left:57px;top:170px;"><span class="l">*R</span></div>
<div class="a t13 " style="left:57px;top:186px;"><span class="l">T</span></div>
<div class="a t13 " style="left:99px;top:186px;"><span class="l">#Istwert</span></div>
<div class="a t13 " style="left:57px;top:202px;"><span class="l">L</span></div>
<div class="a t13 " style="left:99px;top:202px;"><span class="l">#PV_FAC</span></div>
<div class="a t13 " style="left:57px;top:218px;"><span class="l">*R</span></div>
<div class="a t13 " style="left:57px;top:234px;"><span class="l">L</span></div>
<div class="a t13 " style="left:99px;top:234px;"><span class="l">#PV_OFF</span></div>
<div class="a t13 " style="left:57px;top:250px;"><span class="l">+R</span></div>
<div class="a t13 " style="left:57px;top:266px;"><span class="l">T</span></div>
<div class="a t13 " style="left:99px;top:266px;"><span class="l">#Istwert</span></div>
<div class="a t13 " style="left:57px;top:282px;"><span class="l">CLR</span></div>
<div class="a t13 " style="left:57px;top:298px;"><span class="l">A</span></div>
<div class="a t13 " style="left:99px;top:298px;"><span class="l">#PVPER_ON</span></div>
<div class="a t13 " style="left:57px;top:314px;"><span class="l">NOT</span></div>
<div class="a t13 " style="left:57px;top:330px;"><span class="l">JCN</span></div>
<div class="a t13 " style="left:99px;top:330px;"><span class="l">A7d2</span></div>
<div class="a t13 " style="left:57px;top:346px;"><span class="l">L</span></div>
<div class="a t13 " style="left:99px;top:346px;"><span class="l">#PV_IN</span></div>
<div class="a t13 " style="left:57px;top:362px;"><span class="l">T</span></div>
<div class="a t13 " style="left:99px;top:362px;"><span class="l">#Istwert</span></div>
<div class="a t13 " style="left:15px;top:378px;"><span class="l">A7d2:</span></div>
<div class="a t13 " style="left:57px;top:378px;"><span class="l">L</span></div>
<div class="a t13 " style="left:99px;top:378px;"><span class="l">#Istwert</span></div>
<div class="a t13 " style="left:57px;top:394px;"><span class="l">T</span></div>
<div class="a t13 " style="left:99px;top:394px;"><span class="l">#PV</span></div>
<div class="a t13 " style="left:57px;top:410px;"><span class="l">L</span></div>
<div class="a t13 " style="left:99px;top:410px;"><span class="l">#SP_INT</span></div>
<div class="a t13 " style="left:57px;top:426px;"><span class="l">TAK</span></div>
</div>
<div class="a " style="left:1261px;top:239px;width:17px;height:440px;background:linear-gradient(to right,#f3f1ec,#fefefb)"></div>
<div class="a " style="left:377px;top:679px;width:884px;height:17px;background:linear-gradient(to bottom,#f3f1ec,#fefefb)"></div>
<div class="a " style="left:1261px;top:679px;width:17px;height:17px;background:#f1efe5"></div>
<div class="a " style="left:1278px;top:239px;width:2px;height:459px;background:#ece9d8"></div>
<div class="a " style="left:376px;top:696px;width:904px;height:2px;background:#ece9d8"></div>
<div class="a " style="left:1261px;top:239px;width:17px;height:17px;background:linear-gradient(135deg,#cddbfd,#bacbf8);border:1px solid #fff;border-radius:3px;box-shadow:-1px -1px 0 0 #a9bcf2 inset"></div><svg style="left:1261px;top:239px" width="17" height="17"><path d="M4.5 10.5l4-4 4 4" fill="none" stroke="#4d6185" stroke-width="2.200"/></svg>
<div class="a " style="left:1261px;top:290px;width:17px;height:18px;background:linear-gradient(135deg,#cddbfd,#bacbf8);border:1px solid #fff;border-radius:3px;box-shadow:-1px -1px 0 0 #a9bcf2 inset"></div><div class="a " style="left:1266px;top:294px;width:7px;height:1px;background:#eef3ff"></div><div class="a " style="left:1266px;top:296px;width:7px;height:1px;background:#eef3ff"></div><div class="a " style="left:1266px;top:298px;width:7px;height:1px;background:#eef3ff"></div><div class="a " style="left:1266px;top:300px;width:7px;height:1px;background:#eef3ff"></div>
<div class="a " style="left:1261px;top:662px;width:17px;height:17px;background:linear-gradient(135deg,#cddbfd,#bacbf8);border:1px solid #fff;border-radius:3px;box-shadow:-1px -1px 0 0 #a9bcf2 inset"></div><svg style="left:1261px;top:662px" width="17" height="17"><path d="M4.5 6.5l4 4 4-4" fill="none" stroke="#4d6185" stroke-width="2.200"/></svg>
<div class="a " style="left:377px;top:679px;width:17px;height:17px;background:linear-gradient(135deg,#cddbfd,#bacbf8);border:1px solid #fff;border-radius:3px;box-shadow:-1px -1px 0 0 #a9bcf2 inset"></div><svg style="left:377px;top:679px" width="17" height="17"><path d="M10.5 4.5l-4 4 4 4" fill="none" stroke="#4d6185" stroke-width="2.200"/></svg>
<div class="a " style="left:394px;top:679px;width:18px;height:17px;background:linear-gradient(135deg,#cddbfd,#bacbf8);border:1px solid #fff;border-radius:3px;box-shadow:-1px -1px 0 0 #a9bcf2 inset"></div><div class="a " style="left:399px;top:684px;width:1px;height:7px;background:#eef3ff"></div><div class="a " style="left:401px;top:684px;width:1px;height:7px;background:#eef3ff"></div><div class="a " style="left:403px;top:684px;width:1px;height:7px;background:#eef3ff"></div><div class="a " style="left:405px;top:684px;width:1px;height:7px;background:#eef3ff"></div>
<div class="a " style="left:1244px;top:679px;width:17px;height:17px;background:linear-gradient(135deg,#cddbfd,#bacbf8);border:1px solid #fff;border-radius:3px;box-shadow:-1px -1px 0 0 #a9bcf2 inset"></div><svg style="left:1244px;top:679px" width="17" height="17"><path d="M6.5 4.5l4 4-4 4" fill="none" stroke="#4d6185" stroke-width="2.200"/></svg>
<div class="a " style="left:5px;top:708px;width:11px;height:11px;background:#ece9d8;border-top:1px solid #fff;border-left:1px solid #fff;border-right:1px solid #8c897a;border-bottom:1px solid #8c897a;"></div>
<svg style="left:5px;top:708px" width="11" height="11" viewBox="0 0 11 11"><path d="M2.500 3l5 5M7.500 3l-5 5" stroke="#000" stroke-width="1.700"/></svg>
<div class="a " style="left:5px;top:720px;width:11px;height:12px;background:#ece9d8;border-top:1px solid #fff;border-left:1px solid #fff;border-right:1px solid #8c897a;border-bottom:1px solid #8c897a;"></div>
<svg style="left:5px;top:720px" width="11" height="12" viewBox="0 0 11 12"><path d="M3.500 3v6l4-3z" fill="#b4b0a0"/></svg>
<div class="a " style="left:7px;top:733px;width:1px;height:11px;background:#fff"></div>
<div class="a " style="left:8px;top:733px;width:1px;height:11px;background:#f4f2e8"></div>
<div class="a " style="left:9px;top:733px;width:1px;height:11px;background:#a8a494"></div>
<div class="a " style="left:11px;top:733px;width:1px;height:11px;background:#fff"></div>
<div class="a " style="left:12px;top:733px;width:1px;height:11px;background:#f4f2e8"></div>
<div class="a " style="left:13px;top:733px;width:1px;height:11px;background:#a8a494"></div>
<div class="a " style="left:19px;top:706px;width:1257px;height:40px;border-left:1px solid #6a675b;border-top:2px solid #807d6f;border-right:1px solid #fbfaf6;background:#ece9d8"></div>
<div class="a " style="left:19px;top:706px;width:1256px;height:1px;background:#bab6a6"></div>
<div class="a " style="left:20px;top:708px;width:1255px;height:19px;background:#fff"></div>
<div class="a " style="left:20px;top:727px;width:1255px;height:1px;background:#000"></div>
<div class="a " style="left:20px;top:745px;width:1256px;height:1px;background:#fbfaf6"></div>
<div class="a t13 " style="left:25px;top:710px;"><span class="l">STAT: REAL</span></div>
<div class="a " style="left:20px;top:728px;width:18px;height:16px;background:#ece9d8;border-top:1px solid #fff;border-left:1px solid #fff;border-right:1px solid #000;border-bottom:1px solid #8c897a"></div>
<svg style="left:20px;top:728px" width="18" height="16" viewBox="0 0 18 16"><path d="M5 3v9" stroke="#b4b0a0" stroke-width="1.500"/><path d="M12 3v9l-6-4.500z" fill="#b4b0a0"/></svg>
<div class="a " style="left:38px;top:728px;width:18px;height:16px;background:#ece9d8;border-top:1px solid #fff;border-left:1px solid #fff;border-right:1px solid #000;border-bottom:1px solid #8c897a"></div>
<svg style="left:38px;top:728px" width="18" height="16" viewBox="0 0 18 16"><path d="M11 3v9l-6-4.500z" fill="#b4b0a0"/></svg>
<div class="a " style="left:56px;top:728px;width:18px;height:16px;background:#ece9d8;border-top:1px solid #fff;border-left:1px solid #fff;border-right:1px solid #000;border-bottom:1px solid #8c897a"></div>
<svg style="left:56px;top:728px" width="18" height="16" viewBox="0 0 18 16"><path d="M6 3v9l6-4.500z" fill="#b4b0a0"/></svg>
<div class="a " style="left:74px;top:728px;width:18px;height:16px;background:#ece9d8;border-top:1px solid #fff;border-left:1px solid #fff;border-right:1px solid #000;border-bottom:1px solid #8c897a"></div>
<svg style="left:74px;top:728px" width="18" height="16" viewBox="0 0 18 16"><path d="M12 3v9" stroke="#b4b0a0" stroke-width="1.500"/><path d="M5 3v9l6-4.500z" fill="#b4b0a0"/></svg>
<div class="a " style="left:20px;top:743px;width:72px;height:1px;background:#9a9787"></div>
<svg style="left:0;top:727px" width="1280" height="18" viewBox="0 0 1280 18"><polygon points="198,0 306,0 300,16.500 203.7,16.500" fill="#fff"/><path d="M92 0.500L97.7 16.500 M198 0.500L203.7 16.500 M199.5 7L195 16.500 M306 0.500L300 16.500 M304.5 7L309 16.500 M466 0.500L471.7 16.500 M467.5 7L463 16.500 M629 0.500L634.7 16.500 M630.5 7L626 16.500 M742 0.500L747.7 16.500 M743.5 7L739 16.500 M855 0.500L860.7 16.500 M856.5 7L852 16.500 M971 0.500L965 16.500" stroke="#000" stroke-width="1.100" fill="none"/><path d="M97 16.500H197 M203 16.500H301 M307 16.500H465 M471 16.500H628 M634 16.500H741 M747 16.500H854 M860 16.500H966" stroke="#9a9787" stroke-width="1" fill="none" shape-rendering="crispEdges"/></svg>
<div class="a t " style="left:126px;top:730px;"><span class="l">1</span>：错误</div>
<div class="a t " style="left:231px;top:730px;"><span class="l">2</span>：信息</div>
<div class="a t " style="left:353px;top:730px;"><span class="l">3</span>：交叉参考</div>
<div class="a t " style="left:516px;top:730px;"><span class="l">4</span>：地址信息</div>
<div class="a t " style="left:666px;top:730px;"><span class="l">5</span>：修改</div>
<div class="a t " style="left:780px;top:730px;"><span class="l">6</span>：诊断</div>
<div class="a t " style="left:892px;top:730px;"><span class="l">7</span>：比较</div>
<div class="a " style="left:0px;top:749px;width:1280px;height:1px;background:#b8b5a6"></div>
<div class="a " style="left:0px;top:750px;width:1280px;height:1px;background:#f6f4ec"></div>
<div class="a t " style="left:2px;top:756px;">按下<span class="l"> F1 </span>以获取帮助。</div>
<div class="a " style="left:450px;top:752px;width:59px;height:17px;border-top:1px solid #aca899;border-left:1px solid #aca899;border-right:1px solid #fff;border-bottom:1px solid #fff;"></div>
<div class="a " style="left:538px;top:752px;width:161px;height:17px;border-top:1px solid #aca899;border-left:1px solid #aca899;border-right:1px solid #fff;border-bottom:1px solid #fff;"></div><div class="a t " style="left:540px;top:756px;">离线</div>
<div class="a " style="left:702px;top:752px;width:119px;height:17px;border-top:1px solid #aca899;border-left:1px solid #aca899;border-right:1px solid #fff;border-bottom:1px solid #fff;"></div><div class="a t " style="left:704px;top:756px;"><span class="l">Abs &lt; 5.2</span></div>
<div class="a " style="left:824px;top:752px;width:185px;height:17px;border-top:1px solid #aca899;border-left:1px solid #aca899;border-right:1px solid #fff;border-bottom:1px solid #fff;"></div><div class="a t " style="left:826px;top:756px;"><span class="l">Nw 1  LN 25</span></div>
<div class="a " style="left:1012px;top:752px;width:59px;height:17px;border-top:1px solid #aca899;border-left:1px solid #aca899;border-right:1px solid #fff;border-bottom:1px solid #fff;"></div><div class="a t " style="left:1014px;top:756px;">插入</div>
<div class="a " style="left:1074px;top:752px;width:53px;height:17px;border-top:1px solid #aca899;border-left:1px solid #aca899;border-right:1px solid #fff;border-bottom:1px solid #fff;"></div>
<div class="a " style="left:1130px;top:752px;width:149px;height:17px;border-top:1px solid #aca899;border-left:1px solid #aca899;border-right:1px solid #fff;border-bottom:1px solid #fff;"></div>
<svg style="left:517px;top:754px" width="12" height="12" viewBox="0 0 12 12" shape-rendering="crispEdges"><rect x="1.500" y="1.500" width="8" height="6" fill="#fff" stroke="#000"/><rect x="3" y="3" width="5" height="3" fill="#7080c0"/><path d="M3 9.500h6M2 11h8" stroke="#000"/></svg>
<div class="a " style="left:0px;top:770px;width:1280px;height:30px;background:linear-gradient(to bottom,#3a80f0 0px,#2868e0 3px,#245edb 8px,#2460dc 22px,#1f50c4 28px,#1a44b0 30px)"></div>
<div class="a " style="left:1185px;top:770px;width:95px;height:30px;background:linear-gradient(to bottom,#28a8f8 0px,#1590ee 3px,#0f8aea 8px,#1190ec 22px,#0c78d4 28px,#0a68c0 30px);border-left:1px solid #0a3a90"></div>
<div class="a " style="left:0px;top:770px;width:97px;height:30px;background:linear-gradient(to bottom,#2e7a2e 0px,#4aa94a 2.500px,#40a040 7px,#3b9a3b 20px,#2f882f 26px,#256c25 30px);border-radius:0 5px 5px 0/0 15px 15px 0;box-shadow:1px 0 2px #1a3c90"></div>
<svg style="left:11px;top:774px" width="20" height="20" viewBox="0 0 18 18"><path d="M2 3c2-1.500 4-1 6 0l-1.500 6c-2-1-4-1-6 0z" fill="#e8502c"/><path d="M10 3.500c2 1 4 1 6-.500l-1.500 6c-2 1.200-4 1.200-6 0z" fill="#7cc440"/><path d="M0 11c2-1.500 4-1 6 0l-1.500 6c-2-1-4-1-6 0z" fill="#4c8ce8" transform="translate(1.200,0)"/><path d="M8 11.500c2 1 4 1 6-.500l-1.500 6c-2 1.200-4 1.200-6 0z" fill="#f4c430"/></svg>
<div class="a" style="left:37px;top:773px;font:italic 400 18px/22px 'Liberation Sans','Noto Sans CJK SC',sans-serif;color:#fff;text-shadow:1px 1px 1px #2a5a2a;white-space:pre">开始</div>
<svg style="left:108px;top:776px" width="18" height="18" viewBox="0 0 18 18"><rect x="1" y="1" width="15" height="16" rx="3" fill="#2c7ce0"/><circle cx="9" cy="8" r="4.200" fill="none" stroke="#fff" stroke-width="2.600"/><path d="M4.500 5v11" stroke="#fff" stroke-width="2.600"/></svg>
<svg style="left:131px;top:775px" width="20" height="20" viewBox="0 0 20 20"><ellipse cx="10" cy="7" rx="4.500" ry="5.500" fill="#181818"/><ellipse cx="10" cy="9" rx="2.500" ry="3" fill="#fff"/><path d="M7 8h6" stroke="#f0a020" stroke-width="1.500"/><path d="M3 13c4-3 10-3 14 0l-1 3c-4-2-8-2-12 0z" fill="#e03020"/><path d="M1 15c5-2 12-2 18 1l-2 2c-5-2-10-2-15 0z" fill="#f0c030"/><path d="M2 18c5-1 11-1 16 0" stroke="#60b0f0" stroke-width="1.500" fill="none"/></svg>
<svg style="left:153px;top:776px" width="20" height="18" viewBox="0 0 20 18"><path d="M15 8.500a6 6 0 1 0-1.500 5" fill="none" stroke="#58b0f8" stroke-width="3"/><path d="M4 9h11" stroke="#58b0f8" stroke-width="2.400"/><path d="M1 13c3-9 12-12 18-10" fill="none" stroke="#a8d8ff" stroke-width="1.300"/></svg>
<svg style="left:183px;top:776px" width="9" height="7" viewBox="0 0 9 7"><path d="M0.700 0.500l2.800 3-2.800 3M4.700 0.500l2.800 3-2.800 3" fill="none" stroke="#d4e2ff" stroke-width="1.300"/></svg>
<div class="a " style="left:199px;top:774px;width:158px;height:24px;background:linear-gradient(to bottom,#5a98f8 0px,#3f85f2 3px,#3a80f0 12px,#3378ea 21px,#2a68d8 24px);border-radius:3px;box-shadow:inset 1px 1px 0 #6aa4fa,inset -1px -1px 0 #2458c0"></div><svg style="left:208px;top:777px" width="17" height="17" viewBox="0 0 17 17"><circle cx="8.500" cy="8.500" r="7.500" fill="#dfe7f4" stroke="#b8c4dc"/><path d="M3.500 5c2-2.500 5.500-2.500 7 0c-1 2.500-3 1.500-3 4.500c-2.500-1-5-1-4-4.500zM8.500 10.500c2-1.500 5-.5 5 1.500c-1 2.500-4 2.500-5 0zM11 4c1.500 0 3 1.500 3 3c-1.500 0-3-1.500-3-3z" fill="#2454a4"/><path d="M4 3.500c1-1 2.500-1.500 3.500-1.500" stroke="#fff" stroke-width="1.200" fill="none"/></svg><div class="a t" style="left:228px;top:780px;color:#fff;font-weight:400;font-family:'Liberation Mono','Noto Sans CJK SC',sans-serif">西门子工控论坛<span class="l"> ...</span></div>
<div class="a " style="left:359px;top:774px;width:158px;height:24px;background:linear-gradient(to bottom,#5a98f8 0px,#3f85f2 3px,#3a80f0 12px,#3378ea 21px,#2a68d8 24px);border-radius:3px;box-shadow:inset 1px 1px 0 #6aa4fa,inset -1px -1px 0 #2458c0"></div><svg style="left:368px;top:777px" width="17" height="17" viewBox="0 0 17 17"><rect width="17" height="17" fill="#c8c8c0"/><path d="M2 14c0-6 6-12 11-12l2 3c-3 1-5 4-6 7l-4 3z" fill="#000"/><path d="M11 9h4l-2 6" stroke="#20d0c0" stroke-width="1.600" fill="none"/></svg><div class="a t" style="left:388px;top:780px;color:#fff;font-weight:400;font-family:'Liberation Mono','Noto Sans CJK SC',sans-serif"><span class="l">SIMATIC Manager ...</span></div>
<div class="a " style="left:519px;top:774px;width:158px;height:24px;background:linear-gradient(to bottom,#5a98f8 0px,#3f85f2 3px,#3a80f0 12px,#3378ea 21px,#2a68d8 24px);border-radius:3px;box-shadow:inset 1px 1px 0 #6aa4fa,inset -1px -1px 0 #2458c0"></div><svg style="left:528px;top:777px" width="17" height="17" viewBox="0 0 17 17" shape-rendering="crispEdges"><rect width="16" height="16" fill="#e8e4d4"/><path d="M2 1v5M5 1v5M2 3.500h3M5 3.500h4M9 1.500l2 2-2 2M12 2h2v3h-2zM2 8v6M5 8v6M2 10.500h3M5 10.500h3M2 13.500h3" stroke="#000" stroke-width="1" fill="none"/><path d="M9 9l6 6" stroke="#d02010" stroke-width="3"/><path d="M10.500 9.500l5 5" stroke="#f0d020" stroke-width="1"/></svg><div class="a t" style="left:548px;top:780px;color:#fff;font-weight:400;font-family:'Liberation Mono','Noto Sans CJK SC',sans-serif"><span class="l">LAD/STL/FBD  - [...</span></div>
<svg style="left:1150px;top:780px" width="17" height="13" viewBox="0 0 17 13" shape-rendering="crispEdges"><path d="M4 1.500h9" stroke="#101010" stroke-dasharray="1 1"/><rect x="0.500" y="3.500" width="16" height="9" fill="#fff" stroke="#101010"/><path d="M2 6.500h13M2 9.500h13" stroke="#101010" stroke-dasharray="1 1" stroke-width="2"/></svg>
<svg style="left:1176px;top:776px" width="19" height="19" viewBox="0 0 19 19"><circle cx="9.500" cy="9.500" r="8.500" fill="#2c84e8" stroke="#8cc4fa" stroke-width="1"/><path d="M11.500 5.500l-4 4 4 4" fill="none" stroke="#fff" stroke-width="2.200"/></svg>
<div class="a " style="left:1197px;top:777px;width:15px;height:14px;background:#f4f4f0;border:1px solid #e0e0d8"></div>
<svg style="left:1197px;top:777px" width="15" height="14" viewBox="0 0 15 14"><circle cx="7.500" cy="7" r="4" fill="none" stroke="#d89080" stroke-width="1" stroke-dasharray="1.500 1.500"/></svg>
<svg style="left:1213px;top:776px" width="18" height="18" viewBox="0 0 18 18"><path d="M1 9c0-10 16-10 16 0c-2-2-4-2-5.500 0c-1.500-2-3.500-2-5 0c-1.500-2-3.500-2-5.500 0z" fill="#28b838" stroke="#107020" stroke-width=".8"/><path d="M9 3v12c0 2-3 2-3 0" fill="none" stroke="#187028" stroke-width="1.400"/></svg>
<div class="a" style="left:1239px;top:779px;font:12.500px/15px 'Liberation Sans',sans-serif;color:#fff;white-space:pre">0:01</div>
</body></html>
